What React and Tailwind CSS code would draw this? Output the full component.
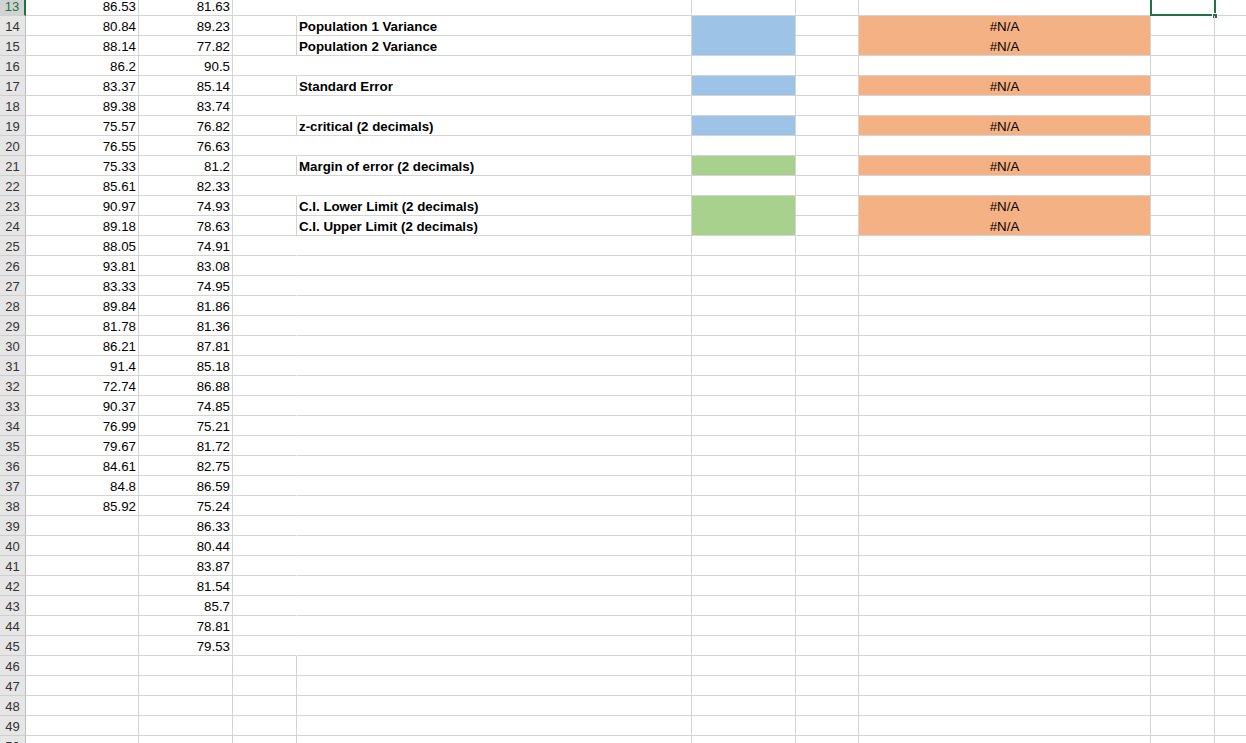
import React from 'react';

// 第13行到第50行的数据
const colA = [86.53, 80.84, 88.14, 86.2, 83.37, 89.38, 75.57, 76.55, 75.33, 85.61, 90.97, 89.18, 88.05, 93.81, 83.33, 89.84, 81.78, 86.21, 91.4, 72.74, 90.37, 76.99, 79.67, 84.61, 84.8, 85.92];
const colB = [81.63, 89.23, 77.82, 90.5, 85.14, 83.74, 76.82, 76.63, 81.2, 82.33, 74.93, 78.63, 74.91, 83.08, 74.95, 81.86, 81.36, 87.81, 85.18, 86.88, 74.85, 75.21, 81.72, 82.75, 86.59, 75.24, 86.33, 80.44, 83.87, 81.54, 85.7, 78.81, 79.53];

const labels = {
  14: 'Population 1 Variance',
  15: 'Population 2 Variance',
  17: 'Standard Error',
  19: 'z-critical (2 decimals)',
  21: 'Margin of error (2 decimals)',
  23: 'C.I. Lower Limit (2 decimals)',
  24: 'C.I. Upper Limit (2 decimals)',
};

// E列填充颜色
const fillE = { 14: 'blue', 15: 'blue', 17: 'blue', 19: 'blue', 21: 'green', 23: 'green', 24: 'green' };

const bgClass = {
  blue: 'bg-[#9dc3e6]',
  green: 'bg-[#a9d18e]',
  orange: 'bg-[#f4b183]',
};
const bbClass = {
  blue: 'border-b-[#9dc3e6]',
  green: 'border-b-[#a9d18e]',
  orange: 'border-b-[#f4b183]',
};

const cell = 'h-[20px] shrink-0 border-r border-b border-[#d4d4d4] flex items-end leading-[16px] whitespace-nowrap';

const Row = ({ n }) => {
  const i = n - 13;
  const a = colA[i];
  const b = colB[i];
  const label = labels[n];
  const selected = n === 13;
  const showCLine = !!label || n >= 46;
  const e = fillE[n];
  const eNext = fillE[n + 1];
  const g = e ? 'orange' : null;
  const gNext = eNext ? 'orange' : null;

  return (
    <div className="flex">
      {/* 行号 */}
      <div
        className={`h-[20px] w-[26px] shrink-0 border-b border-[#cfcfcf] flex items-end justify-center leading-[16px] text-[13px] ${
          selected
            ? 'bg-[#d2d2d2] text-[#217346] border-r-2 border-r-[#217346]'
            : 'bg-[#e6e6e6] text-[#333] border-r border-r-[#bdbdbd]'
        }`}
      >
        {n}
      </div>
      <div className={`${cell} w-[113px] justify-end pr-[2px]`}>{a ?? ''}</div>
      <div className={`${cell} w-[94px] justify-end pr-[2px]`}>{b ?? ''}</div>
      <div className={`${cell} w-[64px] ${showCLine ? '' : 'border-r-white'}`}></div>
      <div className={`${cell} w-[395px] pl-[2px] font-bold`}>{label || ''}</div>
      <div className={`${cell} w-[104px] ${e ? bgClass[e] : ''} ${e && eNext ? bbClass[e] : ''}`}></div>
      <div className={`${cell} w-[63px]`}></div>
      <div className={`${cell} w-[292px] justify-center ${g ? bgClass[g] : ''} ${g && gNext ? bbClass[g] : ''}`}>
        {g ? '#N/A' : ''}
      </div>
      <div className={`${cell} w-[64px] relative`}>
        {selected && (
          <>
            <div className="absolute -left-[1px] -top-[2px] -bottom-[1px] -right-[2px] border-2 border-[#217346]"></div>
            <div className="absolute -right-[4px] -bottom-[4px] w-[6px] h-[6px] bg-[#217346] border border-white"></div>
          </>
        )}
      </div>
      <div className={`${cell} flex-1 border-r-0`}></div>
    </div>
  );
};

export default function App() {
  const rows = [];
  for (let n = 13; n <= 50; n++) rows.push(n);

  return (
    <div className="w-[1246px] h-[743px] overflow-hidden bg-white text-black text-[13.3px] font-['Liberation_Sans',Arial,sans-serif]">
      <div className="-mt-[4px]">
        {rows.map((n) => (
          <Row key={n} n={n} />
        ))}
      </div>
    </div>
  );
}
